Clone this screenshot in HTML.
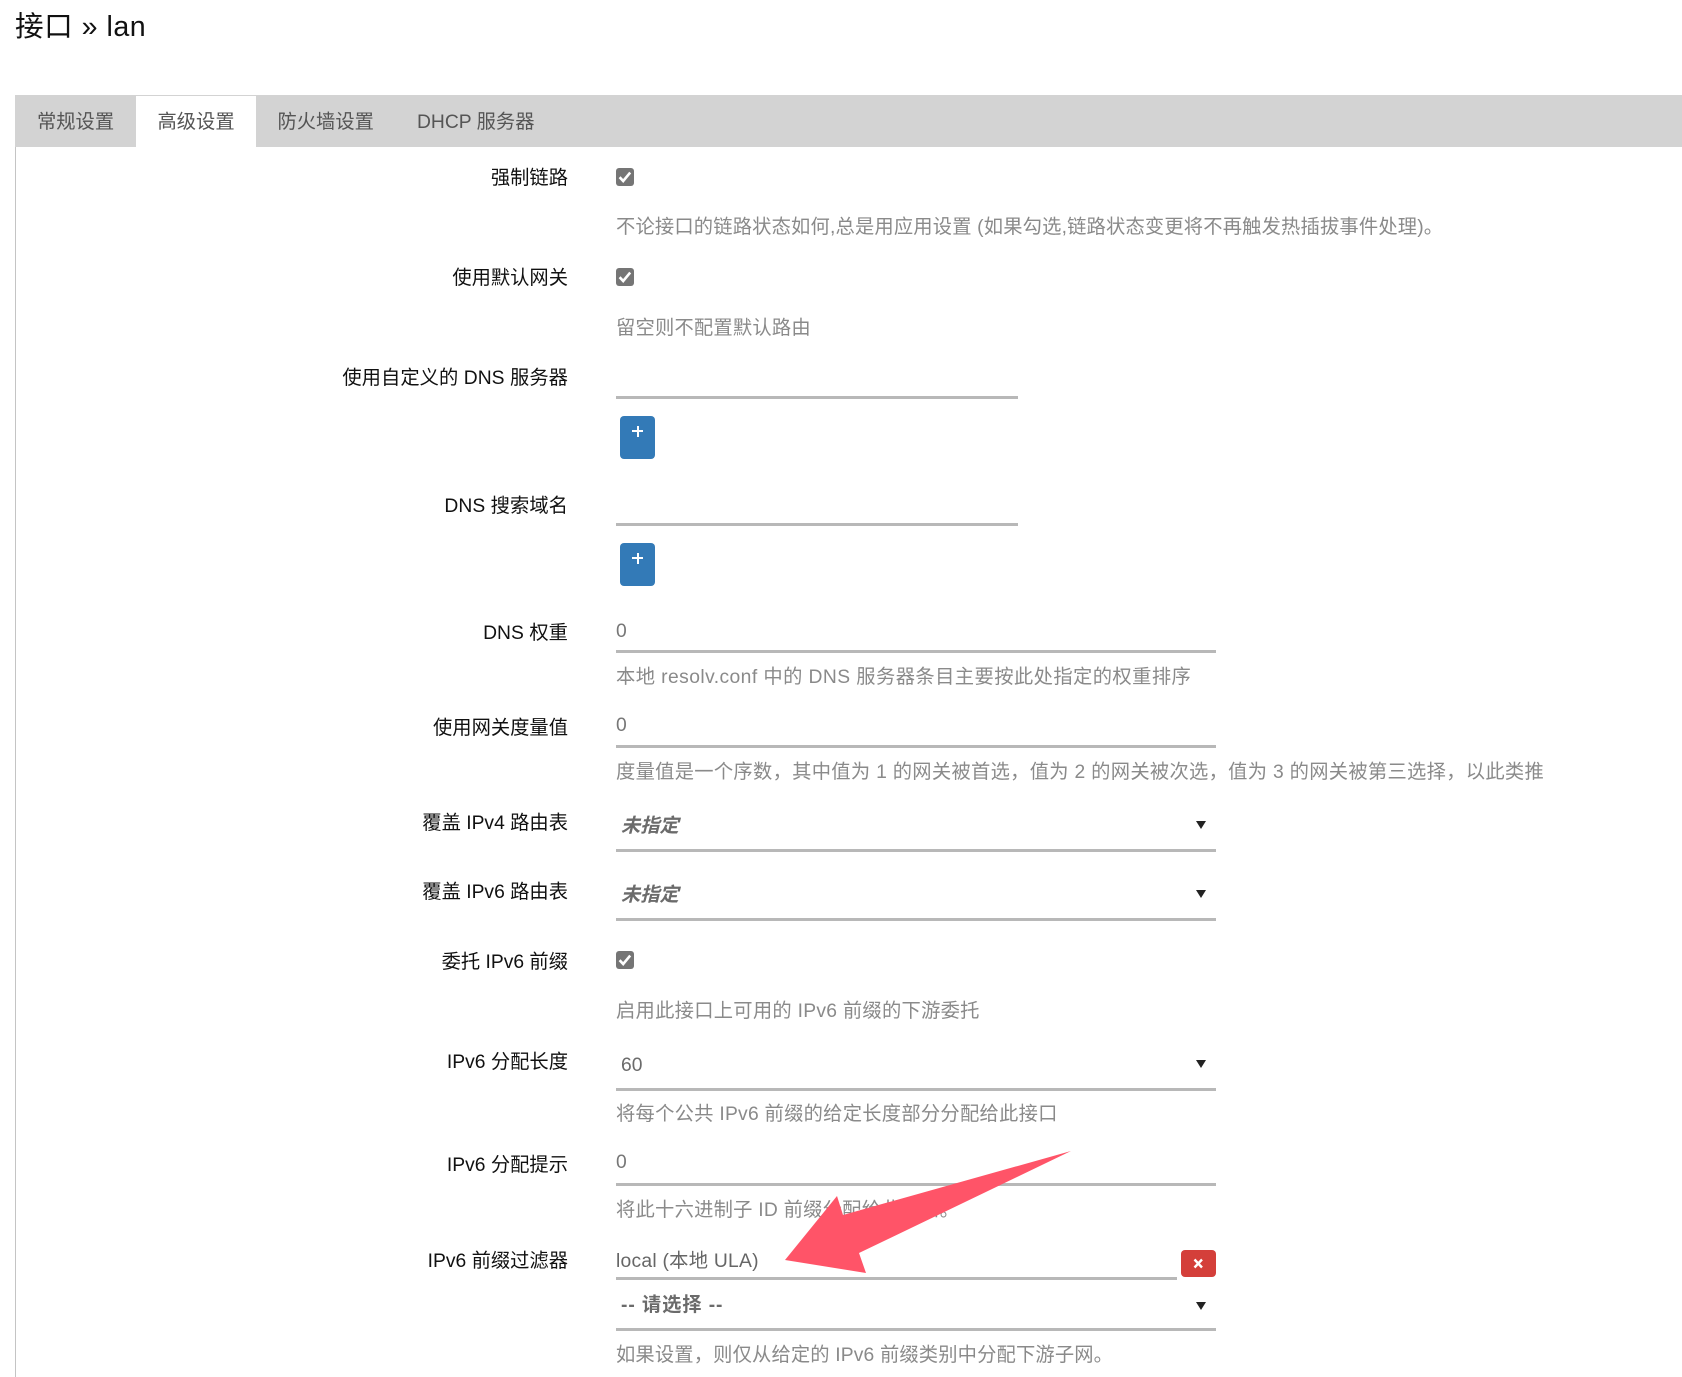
<!DOCTYPE html>
<html lang="zh">
<head>
<meta charset="utf-8">
<title>接口 » lan</title>
<style>
html,body{margin:0;padding:0;background:#fff;width:1682px;height:1377px;overflow:hidden}
body{position:relative;font-family:"Liberation Sans","Noto Sans CJK SC",sans-serif;font-size:19.3px;color:#111}
.t{position:absolute;line-height:30px;height:30px;white-space:nowrap}
.l{right:1114px;text-align:right;color:#111}
.w{letter-spacing:.05px}
.h{left:616px;color:#8a8a8a}
.v{left:616px;color:#777}
.s{left:621px;color:#6b6b6b}
.ln{position:absolute;height:3px;background:#b8b8b8;left:616px;width:600px}
.cb{position:absolute;left:616px;width:18px;height:18px;background:#757575;border-radius:3px}
.cb svg{display:block}
.pl{position:absolute;left:620px;width:35px;height:43px;background:#337ab7;border-radius:4px}
.pl i{position:absolute;background:#fff}
.ar{position:absolute;left:1195.5px;width:0;height:0;border-left:5px solid transparent;border-right:5px solid transparent;border-top:8px solid #222}
</style>
</head>
<body>
<div class="t" style="left:15px;top:12px;font-size:28.6px;color:#111;letter-spacing:.5px">接口 » lan</div>

<div style="position:absolute;left:15px;top:95px;width:1667px;height:52px;background:#d3d3d3"></div>
<div style="position:absolute;left:136px;top:96px;width:120px;height:52px;background:#fff"></div>
<div style="position:absolute;left:15px;top:147px;width:1px;height:1230px;background:#c4c4c4"></div>
<div class="t" style="left:37px;top:108px;color:#555">常规设置</div>
<div class="t" style="left:157.5px;top:108px;color:#555">高级设置</div>
<div class="t" style="left:277.5px;top:108px;color:#555">防火墙设置</div>
<div class="t" style="left:417px;top:108px;color:#555">DHCP 服务器</div>

<div class="t l" style="top:164px">强制链路</div>
<div class="cb" style="top:168px"><svg width="18" height="18" viewBox="0 0 18 18"><path d="M3.6 9.2 L7.2 13 L14.2 4.6" fill="none" stroke="#fff" stroke-width="2.6"/></svg></div>
<div class="t h" style="top:213px;letter-spacing:.17px">不论接口的链路状态如何,总是用应用设置 (如果勾选,链路状态变更将不再触发热插拔事件处理)。</div>

<div class="t l" style="top:264px">使用默认网关</div>
<div class="cb" style="top:268px"><svg width="18" height="18" viewBox="0 0 18 18"><path d="M3.6 9.2 L7.2 13 L14.2 4.6" fill="none" stroke="#fff" stroke-width="2.6"/></svg></div>
<div class="t h" style="top:314px;letter-spacing:.2px">留空则不配置默认路由</div>

<div class="t l w" style="top:364px">使用自定义的 DNS 服务器</div>
<div class="ln" style="top:396px;width:402px"></div>
<div class="pl" style="top:416px"><i style="left:12px;top:14px;width:11px;height:2px"></i><i style="left:16.5px;top:9.5px;width:2px;height:11px"></i></div>

<div class="t l w" style="top:492px">DNS 搜索域名</div>
<div class="ln" style="top:523px;width:402px"></div>
<div class="pl" style="top:543px"><i style="left:12px;top:14px;width:11px;height:2px"></i><i style="left:16.5px;top:9.5px;width:2px;height:11px"></i></div>

<div class="t l w" style="top:619px">DNS 权重</div>
<div class="t v" style="top:617px">0</div>
<div class="ln" style="top:650px"></div>
<div class="t h" style="top:663px;letter-spacing:.42px">本地 resolv.conf 中的 DNS 服务器条目主要按此处指定的权重排序</div>

<div class="t l" style="top:714px">使用网关度量值</div>
<div class="t v" style="top:711px">0</div>
<div class="ln" style="top:745px"></div>
<div class="t h" style="top:758px;letter-spacing:.29px">度量值是一个序数，其中值为 1 的网关被首选，值为 2 的网关被次选，值为 3 的网关被第三选择，以此类推</div>

<div class="t l" style="top:809px">覆盖 IPv4 路由表</div>
<div class="t s" style="top:812px;font-weight:bold;font-style:italic">未指定</div>
<div class="ar" style="top:821px"></div>
<div class="ln" style="top:849px"></div>

<div class="t l" style="top:878px">覆盖 IPv6 路由表</div>
<div class="t s" style="top:881px;font-weight:bold;font-style:italic">未指定</div>
<div class="ar" style="top:890px"></div>
<div class="ln" style="top:918px"></div>

<div class="t l" style="top:948px">委托 IPv6 前缀</div>
<div class="cb" style="top:951px"><svg width="18" height="18" viewBox="0 0 18 18"><path d="M3.6 9.2 L7.2 13 L14.2 4.6" fill="none" stroke="#fff" stroke-width="2.6"/></svg></div>
<div class="t h" style="top:997px;letter-spacing:.27px">启用此接口上可用的 IPv6 前缀的下游委托</div>

<div class="t l" style="top:1048px">IPv6 分配长度</div>
<div class="t s" style="top:1051px">60</div>
<div class="ar" style="top:1060px"></div>
<div class="ln" style="top:1088px"></div>
<div class="t h" style="top:1100px;letter-spacing:.26px">将每个公共 IPv6 前缀的给定长度部分分配给此接口</div>

<div class="t l" style="top:1151px">IPv6 分配提示</div>
<div class="t v" style="top:1148px">0</div>
<div class="ln" style="top:1183px"></div>
<div class="t h" style="top:1196px;letter-spacing:.24px">将此十六进制子 ID 前缀分配给此接口。</div>

<div class="t l" style="top:1247px">IPv6 前缀过滤器</div>
<div class="t v" style="top:1247px;color:#666;letter-spacing:.25px">local (本地 ULA)</div>
<div class="ln" style="top:1277px;width:561px"></div>
<div style="position:absolute;left:1181px;top:1250px;width:35px;height:27px;background:#d43f3a;border-radius:4px"><svg width="35" height="27" viewBox="0 0 35 27" style="display:block"><path d="M13.5 9.5 L21 17.5 M21 9.5 L13.5 17.5" stroke="#fff" stroke-width="2.4" fill="none"/></svg></div>
<div class="t s" style="top:1291px;font-weight:bold;letter-spacing:.9px">-- 请选择 --</div>
<div class="ar" style="top:1302px"></div>
<div class="ln" style="top:1328px"></div>
<div class="t h" style="top:1341px;letter-spacing:.15px">如果设置，则仅从给定的 IPv6 前缀类别中分配下游子网。</div>

<svg width="1682" height="1377" viewBox="0 0 1682 1377" style="position:absolute;left:0;top:0">
<polygon points="1071,1151 843,1215 837,1196 785,1260 866,1273 859,1253" fill="#ff5468"/>
</svg>
</body>
</html>
